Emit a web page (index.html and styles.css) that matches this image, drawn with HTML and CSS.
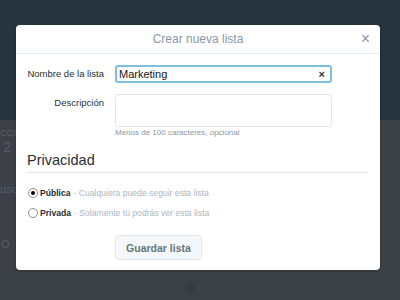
FILE: index.html
```html
<!DOCTYPE html>
<html lang="es">
    <head>
        <meta charset="UTF-8">
        <title>Crear nueva lista</title>
        <link rel="stylesheet" href="styles.css">
    </head>

    <body class="page">
        <div class="page__top"></div>
        <div class="page__bottom">
            <span class="page__ghost page__ghost--a">CCE</span>
            <span class="page__ghost page__ghost--b">2</span>
            <span class="page__ghost page__ghost--c">usc</span>
            <span class="page__ghost page__ghost--d">O</span>
            <span class="page__dot"></span>
        </div>

        <section class="dialog">
            <header class="dialog__header">
                <span class="dialog__title">Crear nueva lista</span>
                <span class="dialog__close">&times;</span>
            </header>

            <div class="dialog__body">
                <div class="dialog__row">
                    <label class="dialog__label">Nombre de la lista</label>
                    <div class="dialog__input dialog__input--focus">
                        <span>Marketing</span>
                        <span class="dialog__clear">&times;</span>
                    </div>
                </div>

                <div class="dialog__row">
                    <label class="dialog__label">Descripción</label>
                    <div class="dialog__field">
                        <div class="dialog__textarea"></div>
                        <span class="dialog__help">Menos de 100 caracteres, opcional</span>
                    </div>
                </div>

                <h2 class="dialog__heading">Privacidad</h2>

                <ul class="dialog__options">
                    <li class="dialog__option">
                        <span class="dialog__radio dialog__radio--checked"></span>
                        <b class="dialog__option__name">Pública</b>
                        <span class="dialog__option__hint">· Cualquiera puede seguir esta lista</span>
                    </li>
                    <li class="dialog__option">
                        <span class="dialog__radio"></span>
                        <b class="dialog__option__name">Privada</b>
                        <span class="dialog__option__hint">· Solamente tú podrás ver esta lista</span>
                    </li>
                </ul>

                <div class="dialog__actions">
                    <button class="dialog__button">Guardar lista</button>
                </div>
            </div>
        </section>
    </body>
</html>
```

FILE: styles.css
```css
html,
body {
    border: none;
    height: 100%;
    margin: 0;
    padding: 0;
    width: 100%;
    overflow: hidden;
}

:root {
    --color-top: #25343e;
    --color-bottom: #3b4147;
    --color-text: #292f33;
    --color-muted: #8899a6;
    --color-light: #aab8c2;
    --color-border: #e1e8ed;
    --color-focus: #7dbfdf;
}

.page {
    font-family: "Liberation Sans", Arial, sans-serif;
    display: flex;
    flex-direction: column;
    position: relative;
}

.page__top {
    background-color: var(--color-top);
    height: 120px;
}

.page__bottom {
    background-color: var(--color-bottom);
    flex: 1;
    position: relative;
}

.page__ghost {
    color: #575d63;
    left: 0;
    position: absolute;
}

.page__ghost--a {
    font-size: 9px;
    top: 8px;
}

.page__ghost--b {
    font-size: 14px;
    top: 19px;
    left: 3px;
}

.page__ghost--c {
    font-size: 11px;
    top: 63px;
}

.page__ghost--d {
    font-size: 11px;
    top: 118px;
    left: 1px;
}

.page__dot {
    background-color: #363b40;
    border-radius: 50%;
    height: 10px;
    left: 186px;
    position: absolute;
    top: 163px;
    width: 9px;
}

.dialog {
    background-color: #ffffff;
    border-radius: 4px;
    box-shadow: 0 1px 3px rgba(0, 0, 0, 0.3);
    height: 245px;
    left: 16px;
    position: absolute;
    top: 25px;
    width: 364px;
}

.dialog__header {
    align-items: center;
    border-bottom: 1px solid #e6ecf0;
    display: flex;
    height: 28px;
    justify-content: center;
    position: relative;
}

.dialog__title {
    color: var(--color-muted);
    font-size: 12px;
}

.dialog__close {
    color: var(--color-muted);
    font-size: 16px;
    position: absolute;
    right: 10px;
    top: 5px;
}

.dialog__body {
    padding: 11px 12px 0 11px;
}

.dialog__row {
    display: grid;
    grid-template-columns: 77px 217px;
    column-gap: 11px;
    margin-bottom: 11px;
}

.dialog__label {
    color: var(--color-text);
    font-size: 9.5px;
    padding-top: 3px;
    text-align: right;
    white-space: nowrap;
}

.dialog__input {
    align-items: center;
    border: 1px solid var(--color-border);
    border-radius: 3px;
    box-sizing: border-box;
    color: #14171a;
    display: flex;
    font-size: 11px;
    height: 18px;
    justify-content: space-between;
    padding: 0 6px 0 3px;
}

.dialog__input--focus {
    border: 2px solid var(--color-focus);
    padding: 0 5px 0 2px;
}

.dialog__clear {
    color: #333333;
    font-size: 11px;
    font-weight: bold;
}

.dialog__field {
    display: flex;
    flex-direction: column;
}

.dialog__textarea {
    border: 1px solid var(--color-border);
    border-radius: 3px;
    box-sizing: border-box;
    height: 33px;
}

.dialog__help {
    color: var(--color-muted);
    font-size: 8px;
    line-height: 10px;
    margin-top: 1px;
}

.dialog__heading {
    border-bottom: 1px solid var(--color-border);
    color: var(--color-text);
    font-size: 14.5px;
    font-weight: normal;
    line-height: 18px;
    margin: 0;
    padding: 2px 0 3px 0;
}

.dialog__options {
    list-style: none;
    margin: 0;
    padding: 10px 0 0 1px;
}

.dialog__option {
    align-items: center;
    display: flex;
    font-size: 8.6px;
    height: 20px;
}

.dialog__radio {
    border: 1px solid #8a8f94;
    border-radius: 50%;
    box-sizing: border-box;
    display: inline-block;
    height: 10px;
    margin-right: 2px;
    position: relative;
    width: 10px;
}

.dialog__radio--checked::after {
    background-color: #000000;
    border-radius: 50%;
    content: "";
    height: 4px;
    left: 2px;
    position: absolute;
    top: 2px;
    width: 4px;
}

.dialog__option__name {
    color: var(--color-text);
    margin-right: 3px;
}

.dialog__option__hint {
    color: var(--color-light);
}

.dialog__actions {
    padding: 12px 0 0 88px;
}

.dialog__button {
    background-color: #f5f8fa;
    border: 1px solid var(--color-border);
    border-radius: 4px;
    color: #66757f;
    font-family: "Liberation Sans", Arial, sans-serif;
    font-size: 10.5px;
    font-weight: bold;
    height: 25px;
    width: 87px;
}
```
